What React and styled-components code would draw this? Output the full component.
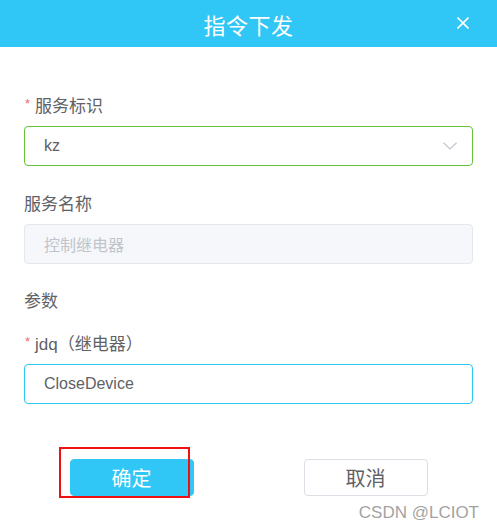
import React from 'react';
import styled, { createGlobalStyle } from 'styled-components';

const GlobalStyle = createGlobalStyle`
  html, body {
    margin: 0;
    padding: 0;
    background: #ffffff;
  }
  body {
    font-family: "Liberation Sans", "Noto Sans CJK SC", sans-serif;
  }
`;

const Dialog = styled.div`
  position: relative;
  width: 497px;
  height: 530px;
  background: #ffffff;
  overflow: hidden;
`;

const Header = styled.div`
  height: 47px;
  background: #30c6f6;
  display: flex;
  align-items: center;
  justify-content: center;
  position: relative;
`;

const Title = styled.div`
  color: #ffffff;
  font-size: 22px;
  font-weight: 400;
  letter-spacing: 0.5px;
  font-family: "Noto Sans CJK SC", sans-serif;
`;

const CloseButton = styled.div`
  position: absolute;
  right: 28px;
  top: 17px;
  width: 12px;
  height: 12px;
  display: flex;
`;

const Body = styled.div`
  padding: 48px 24px 0 24px;
  display: flex;
  flex-direction: column;
`;

const FormItem = styled.div`
  display: flex;
  flex-direction: column;
  margin-bottom: ${p => p.$mb || 0}px;
`;

const Label = styled.div`
  height: 24px;
  line-height: 24px;
  font-size: 17px;
  color: #606266;
  margin-bottom: ${p => p.$mb ?? 7}px;
  display: flex;
  align-items: center;
  font-family: "Liberation Sans", "Noto Sans CJK SC", sans-serif;
`;

const Star = styled.span`
  color: #f56c6c;
  font-size: 13px;
  margin-right: 5px;
  margin-left: 1px;
  align-self: flex-start;
  line-height: 18px;
`;

const InputBox = styled.div`
  height: 40px;
  box-sizing: border-box;
  border: 1px solid ${p => p.$border || '#dcdfe6'};
  background: ${p => p.$bg || '#ffffff'};
  border-radius: 4px;
  display: flex;
  align-items: center;
  justify-content: space-between;
  padding: 0 15px 0 19px;
  font-size: 16px;
  color: ${p => p.$color || '#606266'};
  font-family: "Liberation Sans", "Noto Sans CJK SC", sans-serif;
`;

const Chevron = styled.svg`
  width: 14px;
  height: 8px;
`;

const ButtonRow = styled.div`
  display: flex;
  justify-content: center;
  gap: 110px;
  margin-top: 55px;
`;

const ButtonWrap = styled.div`
  position: relative;
`;

const Button = styled.div`
  width: 124px;
  height: 37px;
  box-sizing: border-box;
  border-radius: 4px;
  display: flex;
  align-items: center;
  justify-content: center;
  font-size: 20px;
  font-family: "Noto Sans CJK SC", sans-serif;
  background: ${p => (p.$primary ? '#30c6f6' : '#ffffff')};
  color: ${p => (p.$primary ? '#ffffff' : '#606266')};
  border: 1px solid ${p => (p.$primary ? '#30c6f6' : '#dcdfe6')};
`;

const Highlight = styled.div`
  position: absolute;
  left: -11px;
  top: -12px;
  width: 131px;
  height: 51px;
  box-sizing: border-box;
  border: 2px solid #f01010;
  pointer-events: none;
`;

const Watermark = styled.div`
  position: absolute;
  right: 18px;
  bottom: 7px;
  font-size: 17px;
  color: #a3a3a3;
  font-family: "Liberation Sans", sans-serif;
`;

export default function App() {
  return (
    <Dialog>
      <GlobalStyle />
      <Header>
        <Title>指令下发</Title>
        <CloseButton>
          <svg width="12" height="12" viewBox="0 0 12 12">
            <path d="M0.5 0.5 L11.5 11.5 M11.5 0.5 L0.5 11.5" stroke="#ffffff" strokeWidth="1.6" />
          </svg>
        </CloseButton>
      </Header>
      <Body>
        <FormItem $mb={27}>
          <Label><Star>*</Star>服务标识</Label>
          <InputBox $border="#67c23a">
            <span>kz</span>
            <Chevron viewBox="0 0 14 8">
              <path d="M0.5 0.8 L7 7 L13.5 0.8" fill="none" stroke="#c0c4cc" strokeWidth="1.2" />
            </Chevron>
          </InputBox>
        </FormItem>
        <FormItem $mb={26}>
          <Label>服务名称</Label>
          <InputBox $border="#e4e7ed" $bg="#f5f7fa" $color="#c0c4cc">
            <span>控制继电器</span>
          </InputBox>
        </FormItem>
        <FormItem $mb={19}>
          <Label $mb={0}>参数</Label>
        </FormItem>
        <FormItem>
          <Label><Star>*</Star>jdq（继电器）</Label>
          <InputBox $border="#30c6f6">
            <span>CloseDevice</span>
          </InputBox>
        </FormItem>
        <ButtonRow>
          <ButtonWrap>
            <Button $primary>确定</Button>
            <Highlight />
          </ButtonWrap>
          <ButtonWrap>
            <Button>取消</Button>
          </ButtonWrap>
        </ButtonRow>
      </Body>
      <Watermark>CSDN @LCIOT</Watermark>
    </Dialog>
  );
}
